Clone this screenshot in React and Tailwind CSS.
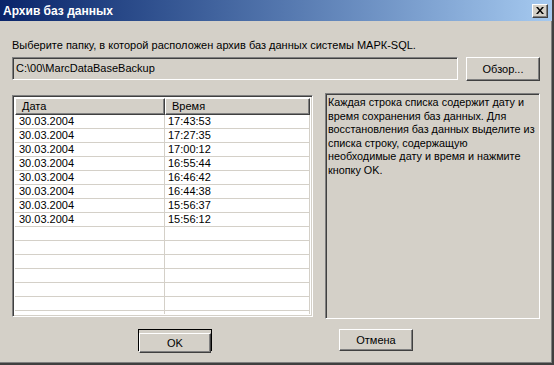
import React from 'react';

const rows = [
  ['30.03.2004', '17:43:53'],
  ['30.03.2004', '17:27:35'],
  ['30.03.2004', '17:00:12'],
  ['30.03.2004', '16:55:44'],
  ['30.03.2004', '16:46:42'],
  ['30.03.2004', '16:44:38'],
  ['30.03.2004', '15:56:37'],
  ['30.03.2004', '15:56:12'],
];

const infoLines = [
  'Каждая строка списка содержит дату и',
  'время сохранения баз данных. Для',
  'восстановления баз данных выделите из',
  'списка строку, содержащую',
  'необходимые дату и время и нажмите',
  'кнопку OK.',
];

const raised =
  'border border-t-white border-l-white border-b-[#404040] border-r-[#404040] shadow-[inset_-1px_-1px_0_#808080]';
const sunken =
  'border border-t-[#808080] border-l-[#808080] border-b-white border-r-white shadow-[inset_1px_1px_0_#404040,inset_-1px_-1px_0_#d4d0c8]';

function Button({ children, primary, className = '' }) {
  if (primary) {
    return (
      <div className={`border border-black ${className}`}>
        <button className={`w-full h-full bg-[#d4d0c8] ${raised} text-[11px] text-black`}>
          {children}
        </button>
      </div>
    );
  }
  return (
    <button className={`bg-[#d4d0c8] ${raised} text-[11px] text-black ${className}`}>{children}</button>
  );
}

export default function App() {
  const empty = Array.from({ length: 7 });
  return (
    <div
      className="w-[554px] h-[365px] bg-[#d4d0c8] flex flex-col border-r-2 border-b-2 border-[#404040] shadow-[inset_-1px_-1px_0_#808080] overflow-hidden"
      style={{ fontFamily: '"Liberation Sans", Arial, sans-serif' }}
    >
      {/* Title bar */}
      <div className="h-[21px] flex items-center justify-between pl-[3px] pr-[4px] bg-gradient-to-r from-[#0a246a] to-[#a6caf0]">
        <span className="text-white font-bold text-[12px] leading-none">Архив баз данных</span>
        <button className={`w-[16px] h-[14px] bg-[#d4d0c8] ${raised} flex items-center justify-center`}>
          <svg width="8" height="7" viewBox="0 0 8 7">
            <path d="M0 0h2l2 2.5L6 0h2L5 3.5 8 7H6L4 4.5 2 7H0l3-3.5z" fill="#000" />
          </svg>
        </button>
      </div>

      <div className="flex-1 flex flex-col pl-[12px] pr-[12px]">
        <div className="mt-[18px] text-[11px] leading-[13px] text-black">
          Выберите папку, в которой расположен архив баз данных системы МАРК-SQL.
        </div>

        <div className="mt-[5px] flex gap-[8px]">
          <div className={`w-[446px] h-[23px] ${sunken} flex items-center px-[3px] text-[11px] text-black`}>
            C:\00\MarcDataBaseBackup
          </div>
          <Button className="w-[74px] h-[24px]">Обзор...</Button>
        </div>

        <div className="mt-[12px] flex gap-[12px] items-start">
          {/* List */}
          <div className={`mt-[2px] w-[301px] h-[222px] bg-white ${sunken} p-[2px] flex flex-col overflow-hidden`}>
            <div className="flex h-[17px] shrink-0">
              <div className={`w-[150px] ${raised} bg-[#d4d0c8] flex items-center pl-[6px] text-[11px] text-black`}>
                Дата
              </div>
              <div className={`flex-1 ${raised} bg-[#d4d0c8] flex items-center pl-[6px] text-[11px] text-black`}>
                Время
              </div>
            </div>
            <div className="flex-1 overflow-hidden">
              {rows.map(([d, t], i) => (
                <div key={i} className="flex h-[14px] border-b border-[#d4d0c8] text-[11px] leading-[13px] text-black">
                  <div className="w-[150px] border-r border-[#d4d0c8] pl-[4px]">{d}</div>
                  <div className="flex-1 border-r border-[#d4d0c8] pl-[3px]">{t}</div>
                </div>
              ))}
              {empty.map((_, i) => (
                <div key={i} className="flex h-[14px] border-b border-[#d4d0c8]">
                  <div className="w-[150px] border-r border-[#d4d0c8]" />
                  <div className="flex-1 border-r border-[#d4d0c8]" />
                </div>
              ))}
            </div>
          </div>

          {/* Info */}
          <div className={`w-[215px] h-[226px] ${sunken} pl-[2px] pt-[2px] text-[10.8px] leading-[13.5px] text-black overflow-hidden`}>
            {infoLines.map((l, i) => (
              <div key={i} className="whitespace-nowrap">{l}</div>
            ))}
          </div>
        </div>

        <div className="mt-[10px] flex">
          <Button primary className="ml-[126px] w-[74px] h-[22px]">OK</Button>
          <Button className="ml-[127px] w-[74px] h-[22px]">Отмена</Button>
        </div>
      </div>
    </div>
  );
}
